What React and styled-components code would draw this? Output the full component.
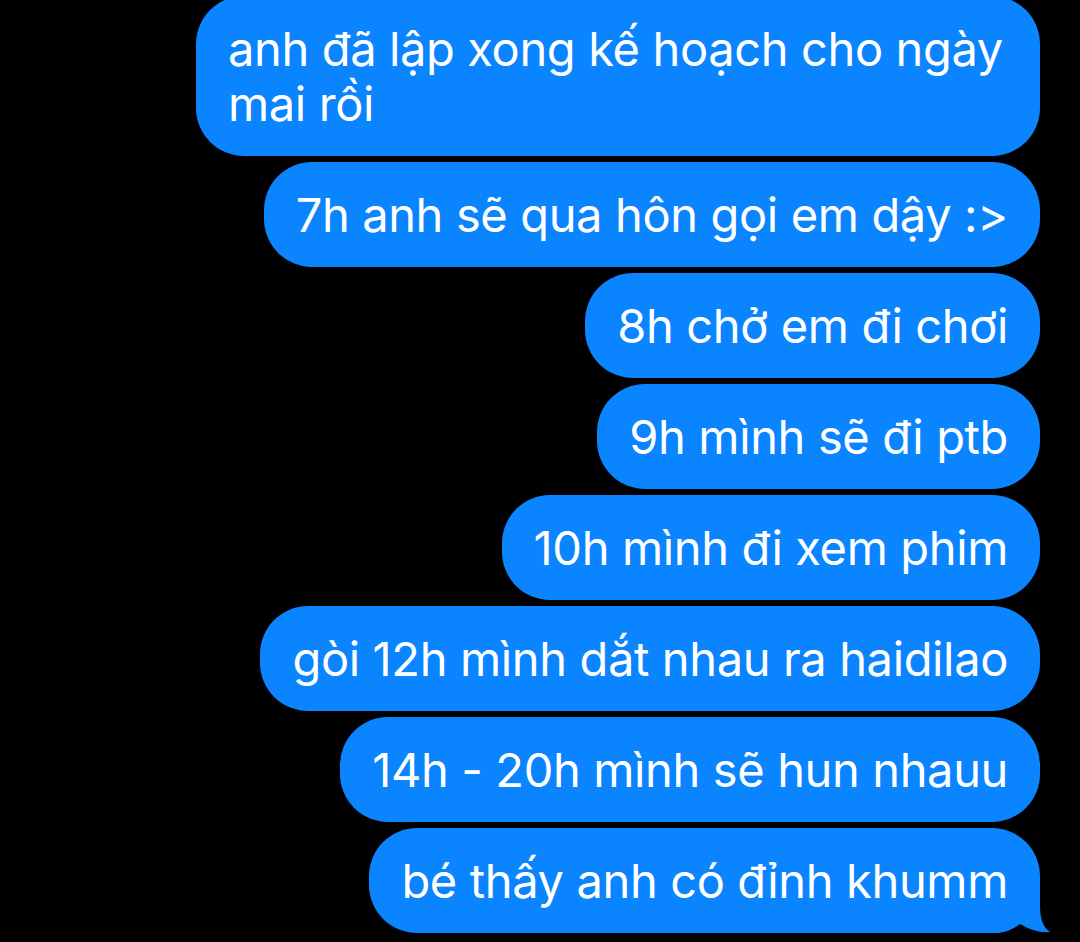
import React from 'react';
import styled, { createGlobalStyle } from 'styled-components';

const GlobalStyle = createGlobalStyle`
  html, body {
    margin: 0;
    padding: 0;
    background: #000;
  }
`;

const Screen = styled.div`
  width: 1080px;
  height: 942px;
  overflow: hidden;
  background: #000;
`;

const Thread = styled.div`
  display: flex;
  flex-direction: column;
  align-items: flex-end;
  gap: 6px;
  margin-top: -4px;
  padding-right: 40px;
`;

const Bubble = styled.div`
  position: relative;
  box-sizing: border-box;
  max-width: 844px;
  width: ${(p) => (p.$wide ? '844px' : 'auto')};
  padding: 25px ${(p) => (p.$wide ? '20px' : '32px')} 25px 32px;
  border-radius: 48px;
  background: #0a84ff;
  color: #fff;
  font-family: Inter, 'Noto Sans', 'Liberation Sans', sans-serif;
  font-size: 47px;
  line-height: 55px;
  letter-spacing: -0.36px;
`;

const Text = styled.span`
  position: relative;
  z-index: 1;
`;

const Tail = styled.svg`
  position: absolute;
  right: -12px;
  bottom: 0;
  width: 57px;
  height: 45px;
  z-index: 0;
`;

const messages = [
  'anh đã lập xong kế hoạch cho ngày mai rồi',
  '7h anh sẽ qua hôn gọi em dậy :>',
  '8h chở em đi chơi',
  '9h mình sẽ đi ptb',
  '10h mình đi xem phim',
  'gòi 12h mình dắt nhau ra haidilao',
  '14h - 20h mình sẽ hun nhauu',
  'bé thấy anh có đỉnh khumm',
];

const App = () => {
  return (
    <>
      <GlobalStyle />
      <Screen>
        <Thread>
          {messages.map((text, i) => (
            <Bubble key={i} $wide={i === 0}>
              {i === messages.length - 1 && (
                <Tail viewBox="0 0 57 45">
                  <path
                    d="M0,0 H45 V17 C45,31 48,39 55,44 C46,45 35,42 25,36 C18,41 10,45 0,45 Z"
                    fill="#0a84ff"
                  />
                </Tail>
              )}
              <Text>{text}</Text>
            </Bubble>
          ))}
        </Thread>
      </Screen>
    </>
  );
};

export default App;
